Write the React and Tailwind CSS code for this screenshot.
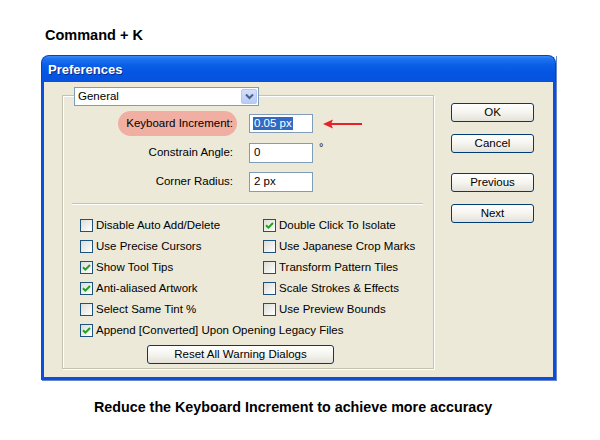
import React from "react";

const F = { fontFamily: '"Liberation Sans", Arial, sans-serif' };

function Check({ checked }) {
  return (
    <span className="w-[13px] h-[13px] shrink-0 border border-[#1c5180] bg-gradient-to-br from-[#dcdcd7] to-white flex items-center justify-center">
      {checked && (
        <svg width="9" height="9" viewBox="0 0 9 9">
          <path d="M1 4.2 L3.4 6.6 L8 2" fill="none" stroke="#21a121" strokeWidth="2" />
        </svg>
      )}
    </span>
  );
}

function CheckRow({ checked, label }) {
  return (
    <div className="h-[21px] flex items-center gap-[3px] text-[11.5px] text-black whitespace-nowrap">
      <Check checked={checked} />
      <span>{label}</span>
    </div>
  );
}

function XPButton({ children, className = "" }) {
  return (
    <div
      className={
        "h-[19px] border border-[#003c74] rounded-[3px] bg-gradient-to-b from-white via-[#f5f4ef] to-[#e3e1d8] flex items-center justify-center text-[11.5px] text-black " +
        className
      }
    >
      {children}
    </div>
  );
}

function Field({ label, pill, children }) {
  return (
    <div className="h-[29px] flex items-center">
      <div className="w-[174px] flex justify-end">
        <span
          className={
            "h-[25px] flex items-center pl-[8px] pr-[4px] rounded-full text-[11.5px] text-black " +
            (pill ? "bg-[#f0afa2]" : "")
          }
        >
          {label}
        </span>
      </div>
      {children}
    </div>
  );
}

export default function App() {
  const left = [
    [false, "Disable Auto Add/Delete"],
    [false, "Use Precise Cursors"],
    [true, "Show Tool Tips"],
    [true, "Anti-aliased Artwork"],
    [false, "Select Same Tint %"],
  ];
  const right = [
    [true, "Double Click To Isolate"],
    [false, "Use Japanese Crop Marks"],
    [false, "Transform Pattern Tiles"],
    [false, "Scale Strokes & Effects"],
    [false, "Use Preview Bounds"],
  ];
  return (
    <div className="w-[600px] h-[440px] bg-white flex flex-col" style={F}>
      <div className="pl-[45px] pt-[27px] h-[44px] text-[14.5px] leading-[17px] font-bold text-black">
        Command + K
      </div>
      <div className="ml-[41px] mt-[11px] w-[515px] h-[325px] flex flex-col shadow-[1px_1px_0_#6b86c8]">
        <div className="h-[27px] rounded-t-[8px] bg-[linear-gradient(to_bottom,#3d8cf5_0%,#1f74f2_10%,#0a5fe6_35%,#0556e4_60%,#0552dd_100%)] border-x border-t border-[#0a3fc8] flex items-center pl-[6px] pt-[2px]">
          <span className="text-white font-bold text-[13px] [text-shadow:1px_1px_0_#0a2a8a]">Preferences</span>
        </div>
        <div className="flex-1 bg-[#ece9d8] border-x-[3px] border-b-[3px] border-[#0b4ddd] flex pl-[18px] pt-[13px]">
          <div className="relative w-[372px] h-[274px] border border-[#c5c2b2] shadow-[inset_1px_1px_0_#fff,1px_1px_0_#fff] flex flex-col">
            <div className="absolute left-[11px] top-[-9px] w-[185px] h-[19px] bg-white border border-[#7f9db9] flex items-center">
              <span className="flex-1 pl-[3px] text-[11.5px] text-black">General</span>
              <span className="w-[16px] h-[15px] mr-[1px] rounded-[2px] bg-gradient-to-b from-[#d4e0fb] to-[#b6cbf7] border border-[#b4c8f3] flex items-center justify-center">
                <svg width="9" height="7" viewBox="0 0 9 7">
                  <path d="M1 1.5 L4.5 5 L8 1.5" fill="none" stroke="#4d6185" strokeWidth="2" />
                </svg>
              </span>
            </div>
            <div className="pt-[13px] flex flex-col">
              <Field label="Keyboard Increment:" pill>
                <div className="ml-[12px] w-[64px] h-[19px] bg-white border border-[#7f9db9] flex items-center pl-[3px]">
                  <span className="bg-[#316ac5] text-white text-[11.5px] leading-[13px] px-[1px]">0.05 px</span>
                </div>
                <svg className="ml-[10px]" width="40" height="10" viewBox="0 0 40 10">
                  <path d="M7 5 L39 5" stroke="#e8202a" strokeWidth="2" />
                  <path d="M0 5 L10 0.5 L8 5 L10 9.5 Z" fill="#e8202a" />
                </svg>
              </Field>
              <Field label="Constrain Angle:">
                <div className="ml-[12px] w-[64px] h-[20px] bg-white border border-[#7f9db9] flex items-center pl-[4px] text-[11.5px] text-black">
                  0
                </div>
                <span className="ml-[6px] self-start mt-[1px] text-[11px] text-black">°</span>
              </Field>
              <Field label="Corner Radius:">
                <div className="ml-[12px] w-[64px] h-[20px] bg-white border border-[#7f9db9] flex items-center pl-[4px] text-[11.5px] text-black">
                  2 px
                </div>
              </Field>
            </div>
            <div className="mt-[7px] ml-[9px] mr-[10px] h-[2px] border-t border-[#c5c2b2] border-b border-b-white" />
            <div className="pt-[10px] pl-[17px] flex flex-col">
              <div className="grid grid-cols-[183px_auto]">
                {left.map((l, i) => (
                  <React.Fragment key={i}>
                    <CheckRow checked={l[0]} label={l[1]} />
                    <CheckRow checked={right[i][0]} label={right[i][1]} />
                  </React.Fragment>
                ))}
              </div>
              <CheckRow checked label="Append [Converted] Upon Opening Legacy Files" />
              <XPButton className="mt-[4px] ml-[67px] w-[187px]">Reset All Warning Dialogs</XPButton>
            </div>
          </div>
          <div className="ml-[17px] pt-[8px] flex flex-col w-[83px]">
            <XPButton>OK</XPButton>
            <XPButton className="mt-[12px]">Cancel</XPButton>
            <XPButton className="mt-[20px]">Previous</XPButton>
            <XPButton className="mt-[12px]">Next</XPButton>
          </div>
        </div>
      </div>
      <div className="mt-[19px] pl-[94px] text-[14.3px] leading-[17px] font-bold text-black whitespace-nowrap">
        Reduce the Keyboard Increment to achieve more accuracy
      </div>
    </div>
  );
}
